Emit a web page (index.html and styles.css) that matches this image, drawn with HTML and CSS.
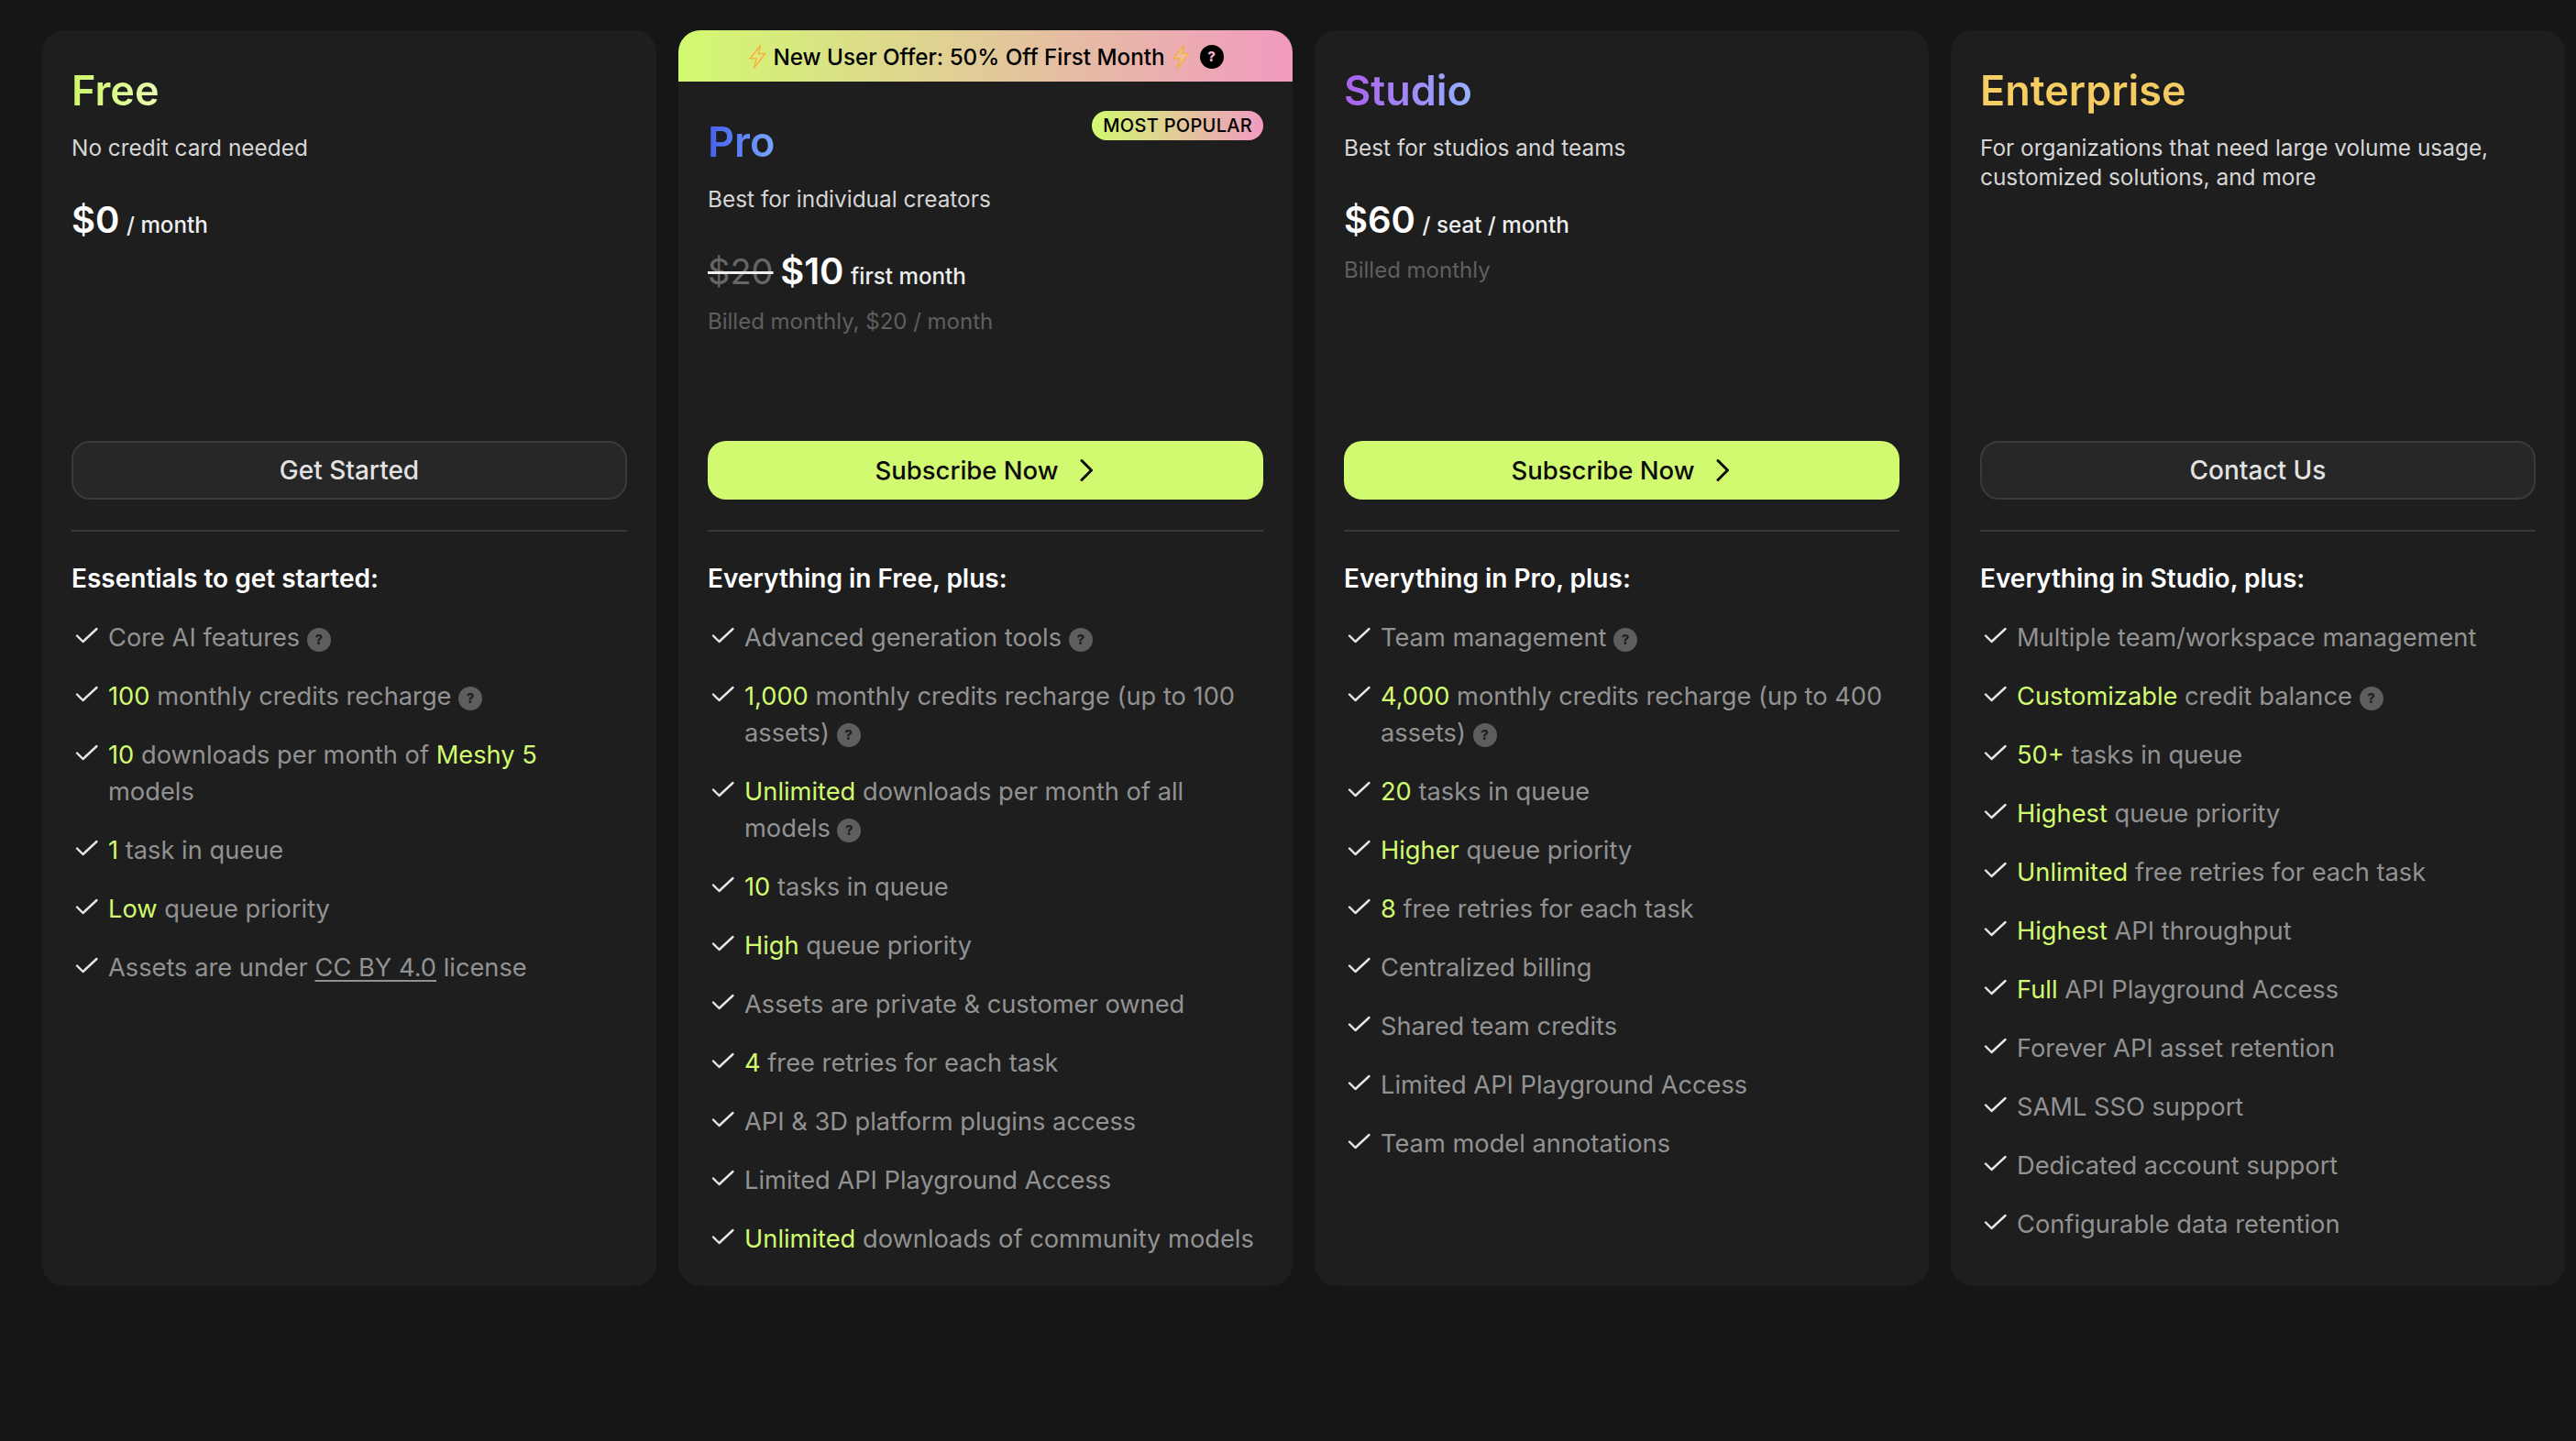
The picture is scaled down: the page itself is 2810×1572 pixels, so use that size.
FILE: index.html
```html
<!DOCTYPE html>
<html>
<head>
    <title>Pricing</title>
    <link rel="stylesheet" href="styles.css">
</head>
<body>
    <svg class="defs" width="0" height="0">
        <symbol id="check" viewBox="0 0 32 32">
            <path d="M6 14.5L12.5 21L27.5 7" fill="none" stroke="currentColor" stroke-width="2.4" stroke-linecap="round" stroke-linejoin="round"/>
        </symbol>
        <symbol id="bolt" viewBox="0 0 24 32">
            <path d="M16 2L3 18H11L8 30L22 12H13.5L16 2Z" fill="#f7e07c" fill-opacity="0.35" stroke="#f2b23e" stroke-width="1.6" stroke-linejoin="round"/>
        </symbol>
        <symbol id="chevron" viewBox="0 0 20 28">
            <path d="M4 3.5L14.5 14L4 24.5" fill="none" stroke="currentColor" stroke-width="3" stroke-linecap="round" stroke-linejoin="round"/>
        </symbol>
    </svg>

    <div class="plans">
        <!-- Free -->
        <div class="card">
            <div class="plan-head">
                <h2 class="plan-name name-free">Free</h2>
                <p class="plan-desc">No credit card needed</p>
                <div class="price"><span class="amount">$0</span> <span class="period">/ month</span></div>
            </div>
            <div class="plan-body">
                <a class="btn btn-dark">Get Started</a>
                <hr class="divider">
                <h3 class="feature-title">Essentials to get started:</h3>
                <ul class="features">
                    <li><svg class="check"><use href="#check"/></svg><span>Core AI features <i class="help">?</i></span></li>
                    <li><svg class="check"><use href="#check"/></svg><span><b>100</b> monthly credits recharge <i class="help">?</i></span></li>
                    <li><svg class="check"><use href="#check"/></svg><span><b>10</b> downloads per month of <b>Meshy 5</b><br>models</span></li>
                    <li><svg class="check"><use href="#check"/></svg><span><b>1</b> task in queue</span></li>
                    <li><svg class="check"><use href="#check"/></svg><span><b>Low</b> queue priority</span></li>
                    <li><svg class="check"><use href="#check"/></svg><span>Assets are under <u>CC BY 4.0</u> license</span></li>
                </ul>
            </div>
        </div>

        <!-- Pro -->
        <div class="card card-offer">
            <div class="offer">
                <svg class="bolt"><use href="#bolt"/></svg>
                <span>New User Offer: 50% Off First Month</span>
                <svg class="bolt"><use href="#bolt"/></svg>
                <i class="help help-black">?</i>
            </div>
            <span class="popular">MOST POPULAR</span>
            <div class="plan-head">
                <h2 class="plan-name name-pro">Pro</h2>
                <p class="plan-desc">Best for individual creators</p>
                <div class="price"><s class="old-price">$20</s> <span class="amount">$10</span> <span class="period">first month</span></div>
                <p class="billed">Billed monthly, $20 / month</p>
            </div>
            <div class="plan-body">
                <a class="btn btn-lime">Subscribe Now <svg class="chevron"><use href="#chevron"/></svg></a>
                <hr class="divider">
                <h3 class="feature-title">Everything in Free, plus:</h3>
                <ul class="features">
                    <li><svg class="check"><use href="#check"/></svg><span>Advanced generation tools <i class="help">?</i></span></li>
                    <li><svg class="check"><use href="#check"/></svg><span><b>1,000</b> monthly credits recharge (up to 100 assets) <i class="help">?</i></span></li>
                    <li><svg class="check"><use href="#check"/></svg><span><b>Unlimited</b> downloads per month of all models <i class="help">?</i></span></li>
                    <li><svg class="check"><use href="#check"/></svg><span><b>10</b> tasks in queue</span></li>
                    <li><svg class="check"><use href="#check"/></svg><span><b>High</b> queue priority</span></li>
                    <li><svg class="check"><use href="#check"/></svg><span>Assets are private &amp; customer owned</span></li>
                    <li><svg class="check"><use href="#check"/></svg><span><b>4</b> free retries for each task</span></li>
                    <li><svg class="check"><use href="#check"/></svg><span>API &amp; 3D platform plugins access</span></li>
                    <li><svg class="check"><use href="#check"/></svg><span>Limited API Playground Access</span></li>
                    <li><svg class="check"><use href="#check"/></svg><span><b>Unlimited</b> downloads of community models</span></li>
                </ul>
            </div>
        </div>

        <!-- Studio -->
        <div class="card">
            <div class="plan-head">
                <h2 class="plan-name name-studio">Studio</h2>
                <p class="plan-desc">Best for studios and teams</p>
                <div class="price"><span class="amount">$60</span> <span class="period">/ seat / month</span></div>
                <p class="billed">Billed monthly</p>
            </div>
            <div class="plan-body">
                <a class="btn btn-lime">Subscribe Now <svg class="chevron"><use href="#chevron"/></svg></a>
                <hr class="divider">
                <h3 class="feature-title">Everything in Pro, plus:</h3>
                <ul class="features">
                    <li><svg class="check"><use href="#check"/></svg><span>Team management <i class="help">?</i></span></li>
                    <li><svg class="check"><use href="#check"/></svg><span><b>4,000</b> monthly credits recharge (up to 400 assets) <i class="help">?</i></span></li>
                    <li><svg class="check"><use href="#check"/></svg><span><b>20</b> tasks in queue</span></li>
                    <li><svg class="check"><use href="#check"/></svg><span><b>Higher</b> queue priority</span></li>
                    <li><svg class="check"><use href="#check"/></svg><span><b>8</b> free retries for each task</span></li>
                    <li><svg class="check"><use href="#check"/></svg><span>Centralized billing</span></li>
                    <li><svg class="check"><use href="#check"/></svg><span>Shared team credits</span></li>
                    <li><svg class="check"><use href="#check"/></svg><span>Limited API Playground Access</span></li>
                    <li><svg class="check"><use href="#check"/></svg><span>Team model annotations</span></li>
                </ul>
            </div>
        </div>

        <!-- Enterprise -->
        <div class="card">
            <div class="plan-head">
                <h2 class="plan-name name-enterprise">Enterprise</h2>
                <p class="plan-desc">For organizations that need large volume usage, customized solutions, and more</p>
            </div>
            <div class="plan-body">
                <a class="btn btn-dark">Contact Us</a>
                <hr class="divider">
                <h3 class="feature-title">Everything in Studio, plus:</h3>
                <ul class="features">
                    <li><svg class="check"><use href="#check"/></svg><span>Multiple team/workspace management</span></li>
                    <li><svg class="check"><use href="#check"/></svg><span><b>Customizable</b> credit balance <i class="help">?</i></span></li>
                    <li><svg class="check"><use href="#check"/></svg><span><b>50+</b> tasks in queue</span></li>
                    <li><svg class="check"><use href="#check"/></svg><span><b>Highest</b> queue priority</span></li>
                    <li><svg class="check"><use href="#check"/></svg><span><b>Unlimited</b> free retries for each task</span></li>
                    <li><svg class="check"><use href="#check"/></svg><span><b>Highest</b> API throughput</span></li>
                    <li><svg class="check"><use href="#check"/></svg><span><b>Full</b> API Playground Access</span></li>
                    <li><svg class="check"><use href="#check"/></svg><span>Forever API asset retention</span></li>
                    <li><svg class="check"><use href="#check"/></svg><span>SAML SSO support</span></li>
                    <li><svg class="check"><use href="#check"/></svg><span>Dedicated account support</span></li>
                    <li><svg class="check"><use href="#check"/></svg><span>Configurable data retention</span></li>
                </ul>
            </div>
        </div>
    </div>
</body>
</html>
```

FILE: styles.css
```css
* {
    box-sizing: border-box;
}

html, body {
    margin: 0;
    height: 100%;
}

body {
    font-family: Inter, "Liberation Sans", sans-serif;
    background-color: #161616;
    color: #fff;
    overflow: hidden;
}

.defs {
    position: absolute;
}

.plans {
    display: flex;
    gap: 24px;
    padding: 33px 12px 0 46px;
}

.card {
    position: relative;
    width: 670px;
    height: 1370px;
    background-color: #1e1e1e;
    border-radius: 24px;
    overflow: hidden;
}

/* the button row lines up across all four cards */
.plan-head {
    height: 448px;
    padding: 32px 32px 0;
}

.card-offer .plan-head {
    height: 392px;
}

.offer {
    display: flex;
    align-items: center;
    justify-content: center;
    gap: 6px;
    height: 56px;
    padding-top: 2px;
    background: linear-gradient(90deg, #d2fa70, #f19ac0);
    color: #000;
    font-size: 24.2px;
    font-weight: 500;
}

.bolt {
    width: 22px;
    height: 28px;
}

.popular {
    position: absolute;
    top: 88px;
    right: 32px;
    height: 32px;
    padding: 0 12px;
    border-radius: 16px;
    background: linear-gradient(90deg, #d2fa70, #f19ac0);
    color: #000;
    font-size: 20px;
    font-weight: 500;
    line-height: 32px;
    letter-spacing: 0.3px;
}

.plan-name {
    margin: 0 0 12px;
    width: fit-content;
    font-size: 45px;
    font-weight: 600;
    line-height: 68px;
    background-clip: text;
    -webkit-background-clip: text;
    color: transparent;
}

.name-free {
    background-image: linear-gradient(90deg, #cdf768, #e8fbb0);
}

.name-pro {
    background-image: linear-gradient(90deg, #4560ee, #7aa4ff);
}

.name-studio {
    background-image: linear-gradient(90deg, #ad5ff0, #94b2ff);
}

.name-enterprise {
    background-image: linear-gradient(90deg, #f5cf63, #f3cb62);
}

.plan-desc {
    margin: 0;
    font-size: 24.4px;
    line-height: 32px;
    color: #d6d6d6;
}

.price {
    margin-top: 35px;
    font-size: 27px;
    line-height: 56px;
    white-space: nowrap;
}

.amount {
    font-size: 40px;
    font-weight: 600;
}

.period {
    font-size: 24.2px;
    font-weight: 500;
    color: #eee;
}

.old-price {
    font-size: 38px;
    color: #666;
    text-decoration-color: #eee;
    text-decoration-thickness: 3px;
}

.billed {
    margin: 4px 0 0;
    font-size: 24px;
    line-height: 34px;
    color: #5f5f5f;
}

.plan-body {
    padding: 0 32px;
}

.btn {
    display: flex;
    align-items: center;
    justify-content: center;
    gap: 21px;
    height: 64px;
    border-radius: 20px;
    font-size: 28px;
    font-weight: 500;
}

.btn-dark {
    background-color: #272727;
    border: 2px solid #3b3b3b;
    color: #e2e2e2;
}

.btn-lime {
    background-color: #d2fa70;
    color: #0c0c0c;
    font-size: 27.5px;
}

.chevron {
    width: 20px;
    height: 28px;
}

.divider {
    margin: 33px 0 0;
    border: none;
    border-top: 2px solid #383838;
}

.feature-title {
    margin: 31px 0 25px;
    font-size: 28px;
    font-weight: 600;
    line-height: 40px;
    color: #fff;
}

.features {
    display: flex;
    flex-direction: column;
    gap: 24px;
    margin: 0;
    padding: 0;
    list-style: none;
    font-size: 27.25px;
    line-height: 40px;
    color: #929292;
}

.features li {
    display: flex;
    gap: 8px;
}

.features b {
    font-weight: 400;
    color: #d2fa70;
}

.features u {
    text-decoration-thickness: 2px;
    text-underline-offset: 4px;
}

.check {
    flex: none;
    width: 32px;
    height: 32px;
    margin-top: 3px;
    color: #e6e6e6;
}

.help {
    display: inline-block;
    width: 26px;
    height: 26px;
    border-radius: 50%;
    background-color: #5e5e5e;
    color: #1e1e1e;
    font-size: 15px;
    font-style: normal;
    font-weight: 800;
    line-height: 26px;
    text-align: center;
    vertical-align: middle;
}

.help-black {
    background-color: #000;
    color: #f0b5c5;
    margin-left: 4px;
}
```
